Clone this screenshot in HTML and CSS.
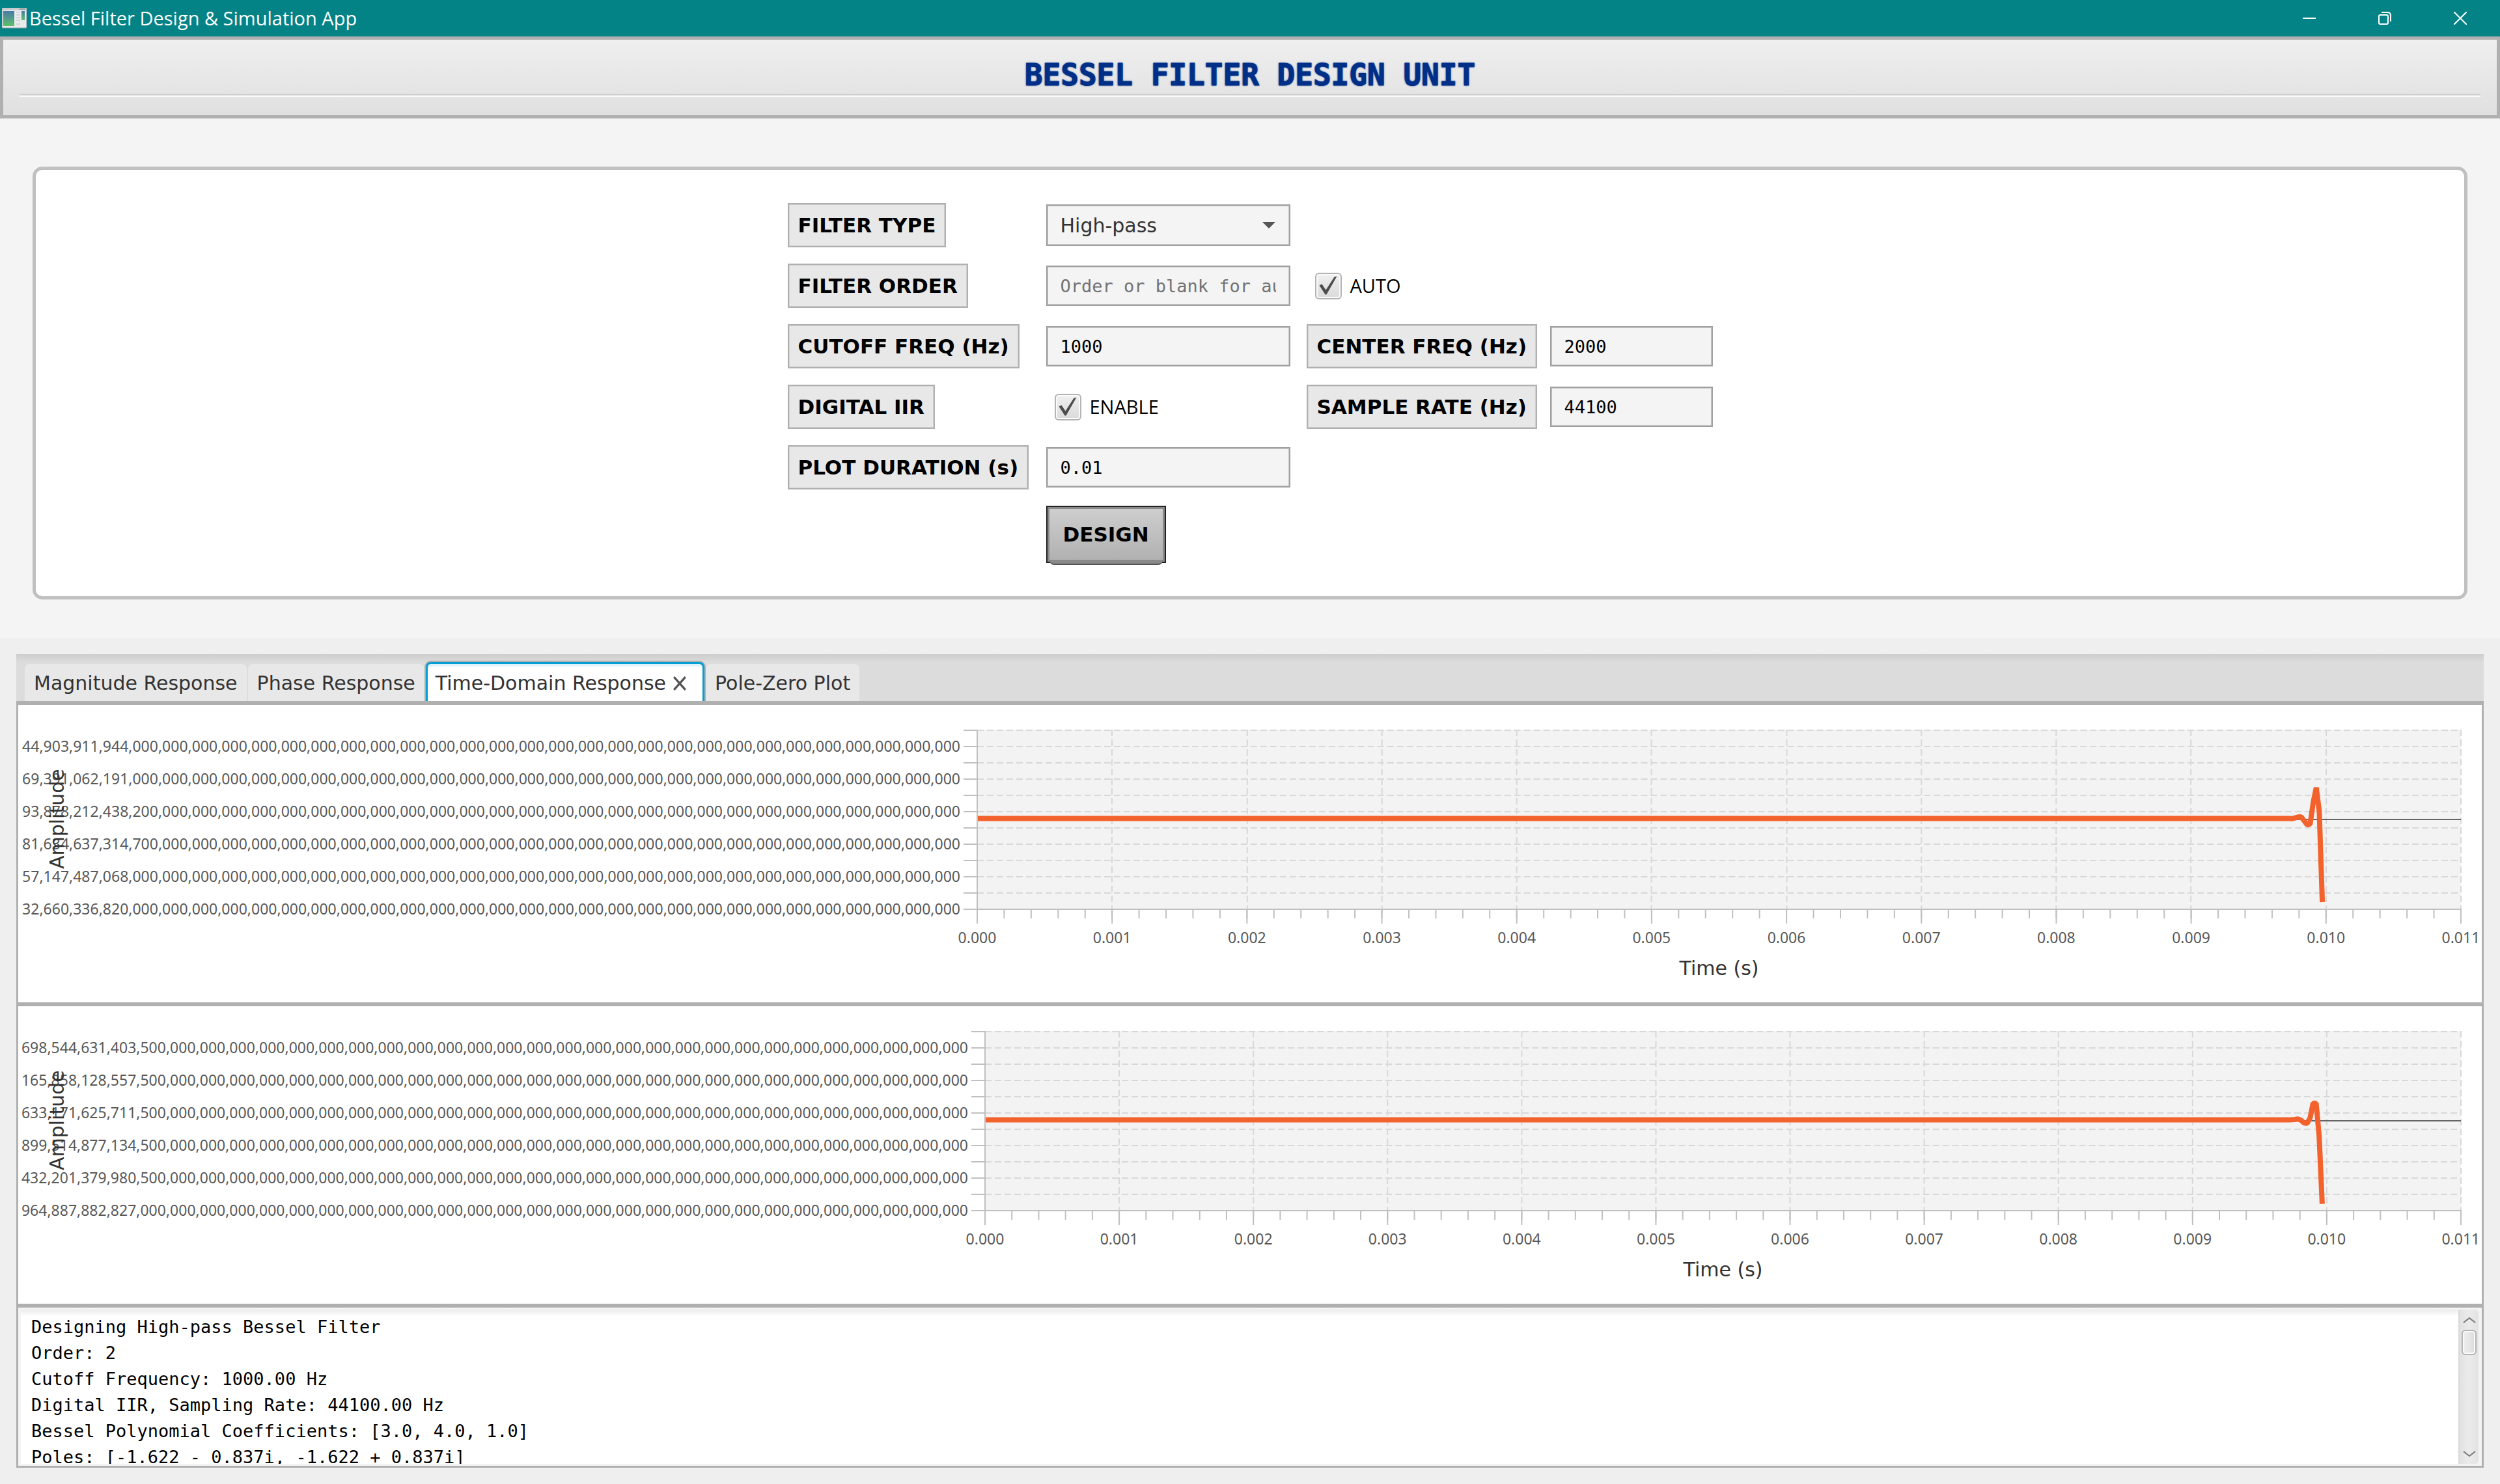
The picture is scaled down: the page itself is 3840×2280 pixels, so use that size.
FILE: index.html
```html
<!DOCTYPE html>
<html lang="en">
<head>
<meta charset="utf-8">
<title>Bessel Filter Design &amp; Simulation App</title>
<link rel="stylesheet" href="styles.css">
</head>
<body>
<div class="titlebar">
  <svg class="app-icon" width="38" height="32" viewBox="0 0 38 32" aria-hidden="true">
    <defs>
      <linearGradient id="pane" x1="0" y1="0" x2="0" y2="1"><stop offset="0" stop-color="#4a7aa8"/><stop offset="1" stop-color="#5fbf6a"/></linearGradient>
    </defs>
    <rect x="0" y="0" width="38" height="31" rx="1" fill="#e9ebec" stroke="#8f9a9c"/>
    <rect x="1" y="1" width="36" height="3" fill="#c9cfd2"/>
    <rect x="27" y="1" width="9" height="2" fill="#98a2a6"/>
    <rect x="2" y="5" width="17" height="23" fill="url(#pane)"/>
    <rect x="30" y="5" width="5" height="14" fill="url(#pane)"/>
    <path d="M22 7h6M22 11h6M22 15h6M22 19h6M22 25h6" stroke="#b9c0c3" stroke-width="1"/>
  </svg>
  <span class="app-name">Bessel Filter Design &amp; Simulation App</span>
  <div class="window-buttons">
    <button class="window-button" type="button" aria-label="Minimize"><svg width="20" height="20" viewBox="0 0 20 20"><path d="M0 10H20" stroke="#fff" stroke-width="2"/></svg></button>
    <button class="window-button" type="button" aria-label="Restore"><svg width="20" height="20" viewBox="0 0 20 20" fill="none" stroke="#fff" stroke-width="2"><rect x="1" y="5" width="14" height="14" rx="2"/><path d="M5 1H14Q19 1 19 6V15"/></svg></button>
    <button class="window-button" type="button" aria-label="Close"><svg width="20" height="20" viewBox="0 0 20 20"><path d="M0 0L20 20M20 0L0 20" stroke="#fff" stroke-width="2"/></svg></button>
  </div>
</div>

<header class="banner">
  <h1 class="banner-title">BESSEL FILTER DESIGN UNIT</h1>
  <hr class="banner-rule">
</header>

<section class="controls">
  <form class="panel">
    <label class="tag" for="type">FILTER TYPE</label>
    <div class="select"><select id="type" class="field field-select"><option>High-pass</option><option>Low-pass</option><option>Band-pass</option></select></div>

    <label class="tag row-start" for="order">FILTER ORDER</label>
    <input class="field" id="order" type="text" placeholder="Order or blank for auto">
    <label class="check"><input type="checkbox" checked>AUTO</label>

    <label class="tag row-start" for="cutoff">CUTOFF FREQ (Hz)</label>
    <input class="field" id="cutoff" type="text" value="1000">
    <label class="tag" for="center">CENTER FREQ (Hz)</label>
    <input class="field" id="center" type="text" value="2000">

    <label class="tag row-start" for="iir">DIGITAL IIR</label>
    <label class="check"><input id="iir" type="checkbox" checked>ENABLE</label>
    <label class="tag" for="rate">SAMPLE RATE (Hz)</label>
    <input class="field" id="rate" type="text" value="44100">

    <label class="tag row-start" for="duration">PLOT DURATION (s)</label>
    <input class="field" id="duration" type="text" value="0.01">

    <button class="design" type="button">DESIGN</button>
  </form>
</section>

<main class="results">
  <div class="frame">
    <div class="tabs" role="tablist">
      <button class="tab" type="button" role="tab">Magnitude Response</button>
      <button class="tab" type="button" role="tab">Phase Response</button>
      <button class="tab tab-selected" type="button" role="tab" aria-selected="true">Time-Domain Response<svg width="22" height="22" viewBox="0 0 20 20" aria-hidden="true"><path d="M2 1L18 19M18 1L2 19" stroke="#555" stroke-width="3"/></svg></button>
      <button class="tab" type="button" role="tab">Pole-Zero Plot</button>
    </div>

    <figure class="chart">
      <ul class="y-labels">
        <li>44,903,911,944,000,000,000,000,000,000,000,000,000,000,000,000,000,000,000,000,000,000,000,000,000,000,000,000,000,000,000,000</li>
        <li>69,391,062,191,000,000,000,000,000,000,000,000,000,000,000,000,000,000,000,000,000,000,000,000,000,000,000,000,000,000,000,000</li>
        <li>93,878,212,438,200,000,000,000,000,000,000,000,000,000,000,000,000,000,000,000,000,000,000,000,000,000,000,000,000,000,000,000</li>
        <li>81,634,637,314,700,000,000,000,000,000,000,000,000,000,000,000,000,000,000,000,000,000,000,000,000,000,000,000,000,000,000,000</li>
        <li>57,147,487,068,000,000,000,000,000,000,000,000,000,000,000,000,000,000,000,000,000,000,000,000,000,000,000,000,000,000,000,000</li>
        <li>32,660,336,820,000,000,000,000,000,000,000,000,000,000,000,000,000,000,000,000,000,000,000,000,000,000,000,000,000,000,000,000</li>
      </ul>
      <span class="y-title">Amplitude</span>
      <div class="y-ticks"></div>
      <div class="plot">
        <svg class="plot-area" viewBox="0 0 2280 275" preserveAspectRatio="none">
          <rect class="plot-fill" width="2280" height="275"/>
          <path class="grid" d="M0 1H2280M0 26H2280M0 51H2280M0 76H2280M0 101H2280M0 126H2280M0 151H2280M0 176H2280M0 201H2280M0 226H2280M0 251H2280"/>
          <path class="grid" d="M207 0V275M415 0V275M622 0V275M829 0V275M1036 0V275M1244 0V275M1451 0V275M1658 0V275M1865 0V275M2073 0V275M2280 0V275"/>
          <path class="zero" d="M0 138H2280"/>
          <path class="axis" d="M0 0V276H2281"/>
          <path class="minor" d="M-1 283H2282" stroke-dasharray="2 39.4545"/>
          <path class="major" d="M-1 287H2282" stroke-dasharray="2 205.2727"/>
          <path class="series" d="M1 136.5H2015.7L2020.3 136.8L2025 135.7L2029.7 134.3L2034.3 134L2039 139.7L2043.7 146.3L2048.3 145L2053 112L2057.7 89L2062.3 125.7L2067 265"/>
        </svg>
        <ol class="x-labels"><li>0.000</li><li>0.001</li><li>0.002</li><li>0.003</li><li>0.004</li><li>0.005</li><li>0.006</li><li>0.007</li><li>0.008</li><li>0.009</li><li>0.010</li><li>0.011</li></ol>
        <figcaption class="x-title">Time (s)</figcaption>
      </div>
    </figure>

    <figure class="chart chart-wide-axis">
      <ul class="y-labels">
        <li>698,544,631,403,500,000,000,000,000,000,000,000,000,000,000,000,000,000,000,000,000,000,000,000,000,000,000,000,000,000,000,000</li>
        <li>165,858,128,557,500,000,000,000,000,000,000,000,000,000,000,000,000,000,000,000,000,000,000,000,000,000,000,000,000,000,000,000</li>
        <li>633,171,625,711,500,000,000,000,000,000,000,000,000,000,000,000,000,000,000,000,000,000,000,000,000,000,000,000,000,000,000,000</li>
        <li>899,514,877,134,500,000,000,000,000,000,000,000,000,000,000,000,000,000,000,000,000,000,000,000,000,000,000,000,000,000,000,000</li>
        <li>432,201,379,980,500,000,000,000,000,000,000,000,000,000,000,000,000,000,000,000,000,000,000,000,000,000,000,000,000,000,000,000</li>
        <li>964,887,882,827,000,000,000,000,000,000,000,000,000,000,000,000,000,000,000,000,000,000,000,000,000,000,000,000,000,000,000,000</li>
      </ul>
      <span class="y-title">Amplitude</span>
      <div class="y-ticks"></div>
      <div class="plot">
        <svg class="plot-area" viewBox="0 0 2266 275" preserveAspectRatio="none">
          <rect class="plot-fill" width="2266" height="275"/>
          <path class="grid" d="M0 1H2266M0 26H2266M0 51H2266M0 76H2266M0 101H2266M0 126H2266M0 151H2266M0 176H2266M0 201H2266M0 226H2266M0 251H2266"/>
          <path class="grid" d="M206 0V275M412 0V275M618 0V275M824 0V275M1030 0V275M1236 0V275M1442 0V275M1648 0V275M1854 0V275M2060 0V275M2266 0V275"/>
          <path class="zero" d="M0 138H2266"/>
          <path class="axis" d="M0 0V276H2267"/>
          <path class="minor" d="M-1 283H2268" stroke-dasharray="2 39.2"/>
          <path class="major" d="M-1 287H2268" stroke-dasharray="2 204"/>
          <path class="series" d="M1 136.5H2002.7L2011 136L2015.7 135.3L2020.3 137L2025 141L2029.7 142L2034.3 134L2039 111L2043.7 111L2048.3 161L2053 265.6"/>
        </svg>
        <ol class="x-labels"><li>0.000</li><li>0.001</li><li>0.002</li><li>0.003</li><li>0.004</li><li>0.005</li><li>0.006</li><li>0.007</li><li>0.008</li><li>0.009</li><li>0.010</li><li>0.011</li></ol>
        <figcaption class="x-title">Time (s)</figcaption>
      </div>
    </figure>

    <div class="console">
      <textarea class="log" readonly aria-label="Design log">Designing High-pass Bessel Filter
Order: 2
Cutoff Frequency: 1000.00 Hz
Digital IIR, Sampling Rate: 44100.00 Hz
Bessel Polynomial Coefficients: [3.0, 4.0, 1.0]
Poles: [-1.622 - 0.837i, -1.622 + 0.837i]</textarea>
      <div class="scrollbar">
        <button class="scroll-arrow" type="button" aria-label="Scroll up"><svg width="20" height="10" viewBox="0 0 20 10"><path d="M1 9L10 2L19 9" fill="none" stroke="#777" stroke-width="2"/></svg></button>
        <div class="scroll-thumb"></div>
        <button class="scroll-arrow scroll-down" type="button" aria-label="Scroll down"><svg width="20" height="10" viewBox="0 0 20 10"><path d="M1 1L10 8L19 1" fill="none" stroke="#777" stroke-width="2"/></svg></button>
      </div>
    </div>
  </div>
</main>
</body>
</html>
```
FILE: styles.css
```css
* { box-sizing: border-box; }

:root {
  --ui: "Open Sans", "Noto Sans", sans-serif;
  --wide: "DejaVu Sans", sans-serif;
  --mono: "DejaVu Sans Mono", monospace;
  --line: #b0b0b0;
}

body {
  margin: 0;
  min-height: 100vh;
  display: flex;
  flex-direction: column;
  background: #efefef;
  font-family: var(--wide);
  font-size: 30px;
  color: #333;
}

button, input, select, textarea { font: inherit; color: inherit; }

/* Window title bar */
.titlebar {
  height: 56px;
  display: flex;
  align-items: center;
  padding: 0 3px;
  background: #048387;
  color: #fff;
  font: 29px/40px var(--ui);
}
.app-icon { margin-right: 4px; }
.window-buttons { margin-left: auto; display: flex; }
.window-button {
  width: 116px;
  height: 56px;
  padding: 0;
  border: 0;
  background: none;
  display: flex;
  align-items: center;
  justify-content: center;
}

/* Banner */
.banner {
  height: 126px;
  padding: 26px 25px 0;
  border: 5px solid var(--line);
  background: linear-gradient(#efefef, #e0e0e0);
}
.banner-title {
  margin: 0;
  font: bold 46px/56px var(--mono);
  text-align: center;
  color: #002f87;
  -webkit-text-stroke: 1px #002f87;
  text-shadow: 0 0 3px #002f87;
}
.banner-rule {
  margin: 1px 0 0;
  height: 5px;
  border: solid;
  border-width: 2px 0;
  border-color: #cfcfcf transparent #fafafa;
}

/* Filter parameters */
.controls { padding: 74px 50px 59px; background: #f4f4f4; }
.panel {
  display: grid;
  grid-template-columns: 372px 375px 349px 250px;
  grid-template-rows: repeat(5, 68px) 88px;
  gap: 25px;
  justify-content: center;
  align-items: center;
  justify-items: start;
  padding: 51px 0;
  border: 5px solid #c0c0c0;
  border-radius: 15px;
  background: #fff;
  color: #000;
}
.row-start { grid-column: 1; }
.tag {
  padding: 0 14px;
  border: 2px solid var(--line);
  box-shadow: inset 0 0 0 1px #d0d0d0;
  background: #e8e8e8;
  font-size: 31px;
  font-weight: bold;
  line-height: 64px;
  white-space: nowrap;
}
.field {
  width: 100%;
  height: 62px;
  padding: 0 20px;
  border: 2px solid #a0a0a0;
  border-radius: 0;
  box-shadow: inset 0 0 0 1px #c8c8c8;
  background: #f4f4f4;
  font: 27px var(--mono);
}
.field::placeholder { color: #737373; opacity: 1; }
.select { position: relative; width: 100%; }
.field-select {
  display: block;
  height: 64px;
  appearance: none;
  font: 30px var(--wide);
  color: #333;
}
.select::after {
  content: "";
  position: absolute;
  right: 23px;
  top: 27px;
  border: 10px solid transparent;
  border-top-color: #555;
  border-bottom: 0;
  pointer-events: none;
}
.check {
  display: flex;
  align-items: center;
  gap: 13px;
  padding-left: 13px;
  font: 29px/40px var(--ui);
}
.check input {
  appearance: none;
  width: 41px;
  height: 41px;
  margin: 0;
  border: 2px solid #b4b4b4;
  border-radius: 6px;
  box-shadow: inset 0 0 0 2px #fafafa;
  background: linear-gradient(#f0f0f0, #dadada);
}
.check input:checked::after {
  content: "";
  display: block;
  width: 37px;
  height: 37px;
  background: #4d4d4d;
  clip-path: polygon(5px 18px, 9px 16px, 15px 25px, 28px 5px, 32px 4px, 16px 32px, 14px 32px);
}
.design {
  position: relative;
  grid-column: 2;
  height: 88px;
  padding: 0 24px;
  border: 2px solid #222;
  box-shadow: inset 0 0 0 3px #8a8a8a;
  background: linear-gradient(#cfcfcf, #b0b0b0);
  font-size: 31px;
  font-weight: bold;
}
/* Lower lip of the raised button */
.design::after {
  content: "";
  position: absolute;
  left: 3px;
  right: 3px;
  bottom: -5px;
  height: 6px;
  border-bottom: 2px solid #555;
  border-radius: 0 0 7px 7px;
  background: #8a8a8a;
}

/* Results */
.results { flex: 1; display: flex; padding: 25px; }
.frame {
  flex: 1;
  min-width: 0;
  display: flex;
  flex-direction: column;
  border: solid var(--line);
  border-width: 0 3px 3px;
  background: #fff;
}
.tabs {
  display: flex;
  align-items: flex-end;
  height: 78px;
  gap: 2px;
  padding: 0 10px;
  margin: 0 -3px;
  border-bottom: 6px solid var(--line);
  background: linear-gradient(#cdcdcd, #dcdcdc 12px);
}
.tab {
  height: 57px;
  padding: 3px 14px 0;
  border: 0;
  border-radius: 8px 8px 0 0;
  background: #e8e8e8;
  line-height: 54px;
  white-space: nowrap;
}
.tab:first-child { margin-left: 3px; }
.tab-selected {
  display: flex;
  align-items: center;
  gap: 10px;
  height: 60px;
  padding-left: 12px;
  padding-right: 24px;
  border: 3px solid #039ed3;
  border-bottom: 0;
  box-shadow: inset 0 6px 0 -2px #e0f3fb, 0 0 0 2px var(--line);
  background: #fff;
}

/* Charts */
.chart {
  --labels: 1447px;
  position: relative;
  display: grid;
  grid-template-columns: var(--labels) 21px 1fr;
  column-gap: 5px;
  margin: 0;
  padding: 38px 32px 32px 0;
  border-bottom: 6px solid var(--line);
  overflow: hidden;
}
.chart-wide-axis { --labels: 1459px; }
.y-labels, .x-labels { margin: 0; padding: 0; list-style: none; font-family: "Noto Sans", sans-serif; font-size: 23px; color: #595959; }
.y-labels li {
  display: flex;
  justify-content: flex-end;
  line-height: 50px;
  white-space: nowrap;
}
.y-title {
  position: absolute;
  left: 40px;
  top: 38px;
  height: 275px;
  line-height: 40px;
  text-align: center;
  writing-mode: vertical-rl;
  transform: rotate(180deg);
}
.y-ticks {
  height: 277px;
  background: repeating-linear-gradient(#c0c0c0 0 2px, transparent 2px 25px);
}
.plot { margin-left: -5px; min-width: 0; }
.plot-area { display: block; width: 100%; height: 275px; overflow: visible; }
.plot-area path { fill: none; stroke-width: 2; }
.plot-area .plot-fill { fill: #f3f3f3; }
.plot-area .grid { stroke: #d8d8d8; stroke-dasharray: 10 5; }
.plot-area .zero { stroke: #666; }
.plot-area .axis { stroke: #c0c0c0; }
.plot-area .minor { stroke: #c0c0c0; stroke-width: 14; }
.plot-area .major { stroke: #c0c0c0; stroke-width: 22; }
.plot-area .series { stroke: #f3622d; stroke-width: 8; stroke-linejoin: bevel; }
.x-labels {
  display: flex;
  justify-content: space-between;
  margin-top: 28px;
  line-height: 32px;
}
.x-labels li { width: 0; display: flex; justify-content: center; }
.x-title { margin-top: 12px; line-height: 40px; text-align: center; }

/* Log console */
.console { flex: 1; display: flex; padding: 3px 5px 3px 4px; background: #f4f4f4; }
.log {
  flex: 1;
  display: block;
  min-height: 160px;
  padding: 7px 16px;
  border: 0;
  outline: 0;
  resize: none;
  overflow: hidden;
  background: linear-gradient(#ececec, #fff 10px);
  font: 27px/40px var(--mono);
  color: #000;
}
.scrollbar {
  width: 31px;
  display: flex;
  flex-direction: column;
  align-items: center;
  border-left: 2px solid #dadada;
  border-radius: 0 5px 5px 0;
  background: linear-gradient(90deg, #e2e2e2, #ebebeb 50%, #e2e2e2);
}
.scroll-arrow {
  width: 100%;
  height: 31px;
  padding: 0;
  border: 0;
  background: none;
  display: flex;
  align-items: center;
  justify-content: center;
}
.scroll-down { margin-top: auto; }
.scroll-thumb {
  width: 23px;
  height: 39px;
  border: 2px solid #b4b4b4;
  border-radius: 6px;
  box-shadow: inset 0 0 0 2px #fafafa;
  background: linear-gradient(90deg, #efefef, #dcdcdc);
}
```
